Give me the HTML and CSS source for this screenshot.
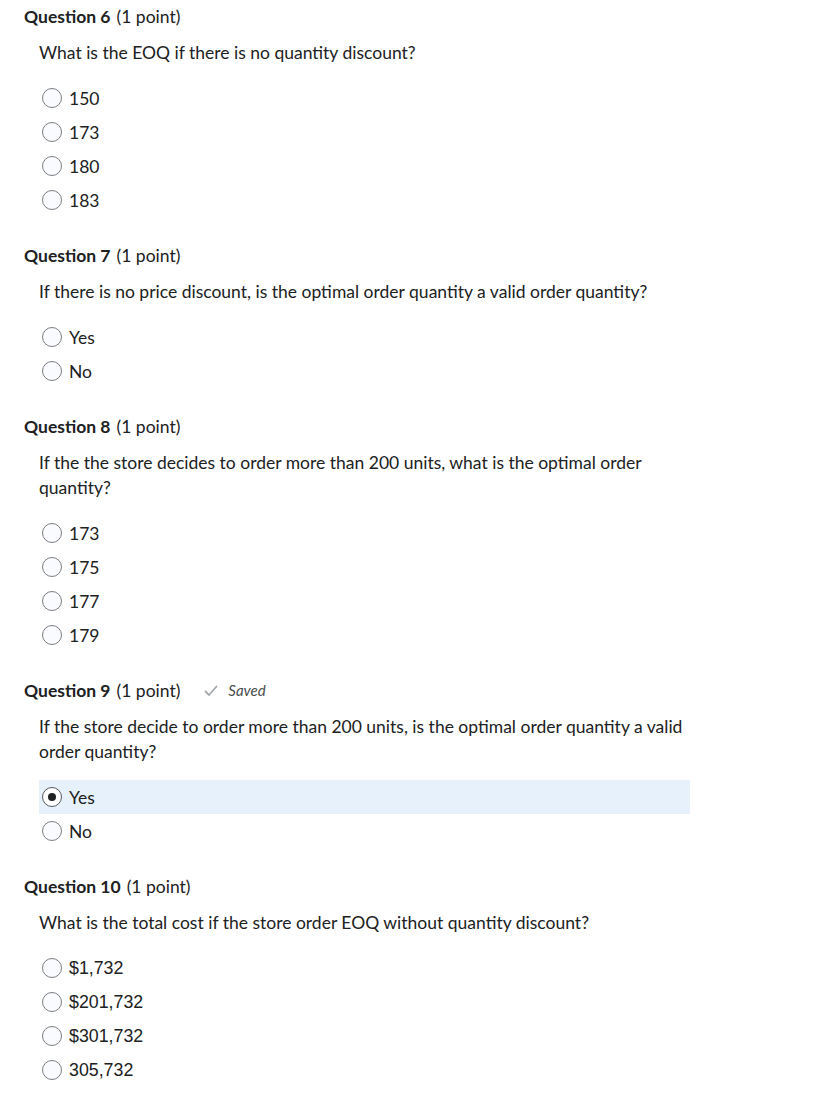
FILE: index.html
```html
<!DOCTYPE html>
<html>
<head>
<meta charset="utf-8">
<link rel="stylesheet" href="styles.css">
</head>
<body>
<div class="quiz">
  <section class="q">
    <h2 class="q-head"><b>Question 6</b> (1 point)</h2>
    <p class="q-text">What is the EOQ if there is no quantity discount?</p>
    <div class="opts">
      <label class="opt"><span class="radio"></span><span>150</span></label>
      <label class="opt"><span class="radio"></span><span>173</span></label>
      <label class="opt"><span class="radio"></span><span>180</span></label>
      <label class="opt"><span class="radio"></span><span>183</span></label>
    </div>
  </section>
  <section class="q">
    <h2 class="q-head"><b>Question 7</b> (1 point)</h2>
    <p class="q-text">If there is no price discount, is the optimal order quantity a valid order quantity?</p>
    <div class="opts">
      <label class="opt"><span class="radio"></span><span>Yes</span></label>
      <label class="opt"><span class="radio"></span><span>No</span></label>
    </div>
  </section>
  <section class="q">
    <h2 class="q-head"><b>Question 8</b> (1 point)</h2>
    <p class="q-text">If the the store decides to order more than 200 units, what is the optimal order<br>quantity?</p>
    <div class="opts">
      <label class="opt"><span class="radio"></span><span>173</span></label>
      <label class="opt"><span class="radio"></span><span>175</span></label>
      <label class="opt"><span class="radio"></span><span>177</span></label>
      <label class="opt"><span class="radio"></span><span>179</span></label>
    </div>
  </section>
  <section class="q">
    <h2 class="q-head"><b>Question 9</b> (1 point)<span class="saved"><svg width="14" height="12" viewBox="0 0 14 12"><path d="M1.5 6.5 L5 10 L12.5 1.5" fill="none" stroke="#a5a9ad" stroke-width="1.8" stroke-linecap="round" stroke-linejoin="round"/></svg><i>Saved</i></span></h2>
    <p class="q-text">If the store decide to order more than 200 units, is the optimal order quantity a valid<br>order quantity?</p>
    <div class="opts">
      <label class="opt selected"><span class="radio checked"></span><span>Yes</span></label>
      <label class="opt"><span class="radio"></span><span>No</span></label>
    </div>
  </section>
  <section class="q">
    <h2 class="q-head"><b>Question 10</b> (1 point)</h2>
    <p class="q-text">What is the total cost if the store order EOQ without quantity discount?</p>
    <div class="opts arial">
      <label class="opt"><span class="radio"></span><span>$1,732</span></label>
      <label class="opt"><span class="radio"></span><span>$201,732</span></label>
      <label class="opt"><span class="radio"></span><span>$301,732</span></label>
      <label class="opt"><span class="radio"></span><span>305,732</span></label>
    </div>
  </section>
</div>
</body>
</html>
```
FILE: styles.css
```css
html, body {
  margin: 0;
  padding: 0;
  background: #ffffff;
}
body {
  font-family: Lato, "Open Sans", sans-serif;
  color: #202122;
  font-size: 17.5px;
}
.quiz {
  padding: 4px 0 0 24px;
}
.q {
  margin-bottom: 26px;
}
.q-head {
  margin: 0;
  font-size: 17.5px;
  font-weight: 400;
  line-height: 25px;
  display: flex;
  align-items: center;
}
.q-head b {
  font-weight: 700;
  margin-right: 6px;
}
.saved {
  display: inline-flex;
  align-items: center;
  margin-left: 24px;
  color: #494c4e;
  font-size: 15px;
}
.saved svg {
  margin-right: 10px;
}
.q-text {
  margin: 11px 0 0 15px;
  line-height: 25px;
}
.opts {
  margin: 16px 0 0 15px;
  width: 651px;
}
.opt {
  display: flex;
  align-items: center;
  height: 34px;
  padding-left: 3px;
}
.opt.selected {
  background: #e7f1fb;
}
.radio {
  width: 18px;
  height: 18px;
  border: 1px solid #7b7e81;
  border-radius: 50%;
  background: #f9fbff;
  margin-right: 7px;
  box-sizing: content-box;
  display: flex;
  align-items: center;
  justify-content: center;
  flex: none;
}
.radio.checked {
  border-color: #565a5c;
  background: #ffffff;
}
.radio.checked::after {
  content: "";
  width: 8px;
  height: 8px;
  border-radius: 50%;
  background: #202122;
}
.arial {
  font-family: "Liberation Sans", Arial, sans-serif;
  font-size: 17.8px;
}
```
